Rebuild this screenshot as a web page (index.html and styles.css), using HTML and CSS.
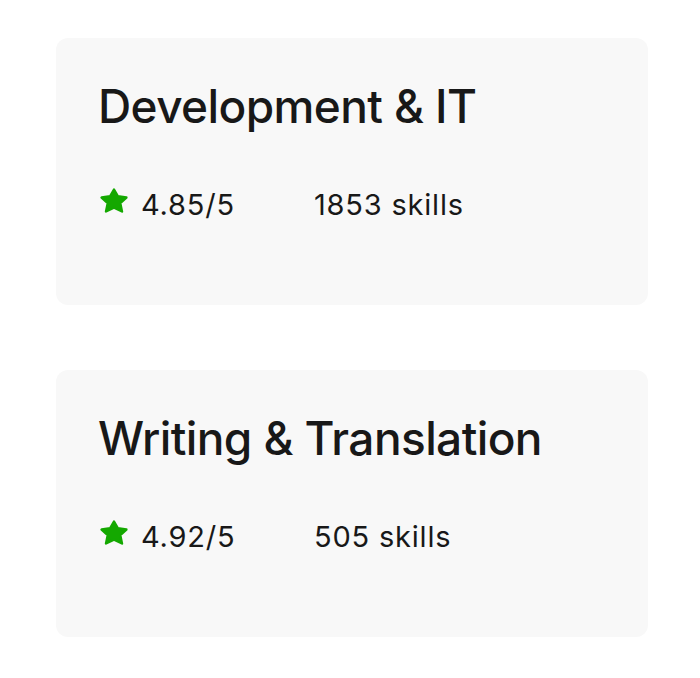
FILE: index.html
```html
<!DOCTYPE html>
<html lang="en">
<head>
    <meta charset="UTF-8">
    <meta name="viewport" content="width=device-width, initial-scale=1.0">
    <title>Categories</title>
    <link rel="stylesheet" href="styles.css">
</head>
<body>

    <div class="list">
        <div class="card">
            <h2 class="card-title">Development &amp; IT</h2>
            <div class="card-stats">
                <span class="rating">
                    <svg class="star" viewBox="0 0 28 25" width="28" height="25" aria-hidden="true">
                        <polygon points="14,1.5 17.8,8.2 26.4,9.5 20.3,15.2 22,23.5 14,19.7 6,23.5 7.7,15.2 1.6,9.5 10.2,8.2"/>
                    </svg>
                    4.85/5
                </span>
                <span class="skills">1853 skills</span>
            </div>
        </div>

        <div class="card">
            <h2 class="card-title">Writing &amp; Translation</h2>
            <div class="card-stats">
                <span class="rating">
                    <svg class="star" viewBox="0 0 28 25" width="28" height="25" aria-hidden="true">
                        <polygon points="14,1.5 17.8,8.2 26.4,9.5 20.3,15.2 22,23.5 14,19.7 6,23.5 7.7,15.2 1.6,9.5 10.2,8.2"/>
                    </svg>
                    4.92/5
                </span>
                <span class="skills">505 skills</span>
            </div>
        </div>
    </div>

</body>
</html>
```

FILE: styles.css
```css
* {
    margin: 0;
    padding: 0;
    box-sizing: border-box;
}
body {
    font-family: Inter, 'Noto Sans', sans-serif;
    background-color: #fff;
    color: #181818;
}
.list {
    display: flex;
    flex-direction: column;
    gap: 65px;
    width: 592px;
    margin: 38px 0 0 56px;
}
.card {
    height: 267px;
    padding: 42px 42px;
    background-color: #f8f8f8;
    border-radius: 12px;
}
.card-title {
    font-size: 46px;
    font-weight: 500;
    line-height: 52px;
    letter-spacing: -0.6px;
}
.card-stats {
    display: flex;
    align-items: center;
    margin-top: 56px;
    font-size: 29px;
    line-height: 32px;
    letter-spacing: 0.8px;
}
.rating {
    display: flex;
    align-items: center;
    gap: 13px;
    width: 216px;
}
.star {
    margin: 0 0 8px 2px;
    fill: #14a800;
    stroke: #14a800;
    stroke-width: 2.4;
    stroke-linejoin: round;
}
```
